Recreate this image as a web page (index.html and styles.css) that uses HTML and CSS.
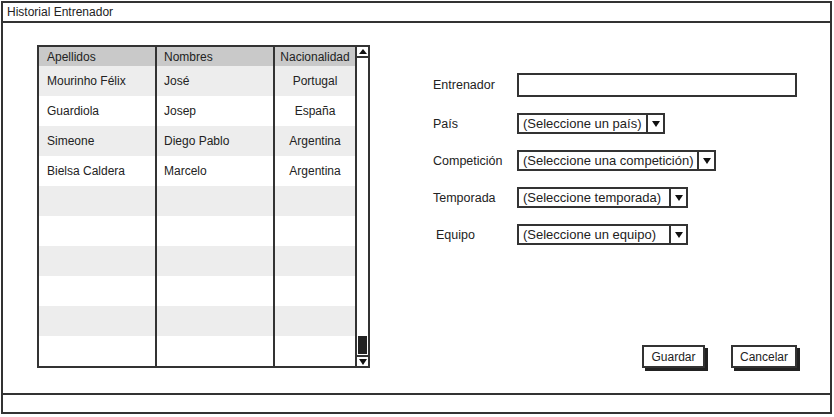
FILE: index.html
```html
<!DOCTYPE html>
<html lang="es">
<head>
    <meta charset="UTF-8">
    <title>Historial Entrenador</title>
    <link rel="stylesheet" href="styles.css">
</head>
<body>
<div class="window">
    <div class="titlebar">Historial Entrenador</div>
    <div class="main">
        <div class="table-wrap">
            <div class="grid">
                <div class="cell head">Apellidos</div>
                <div class="cell head">Nombres</div>
                <div class="cell head center">Nacionalidad</div>

                <div class="cell">Mourinho Félix</div>
                <div class="cell">José</div>
                <div class="cell center">Portugal</div>

                <div class="cell alt">Guardiola</div>
                <div class="cell alt">Josep</div>
                <div class="cell alt center">España</div>

                <div class="cell">Simeone</div>
                <div class="cell">Diego Pablo</div>
                <div class="cell center">Argentina</div>

                <div class="cell alt">Bielsa Caldera</div>
                <div class="cell alt">Marcelo</div>
                <div class="cell alt center">Argentina</div>

                <div class="cell"></div><div class="cell"></div><div class="cell"></div>
                <div class="cell alt"></div><div class="cell alt"></div><div class="cell alt"></div>
                <div class="cell"></div><div class="cell"></div><div class="cell"></div>
                <div class="cell alt"></div><div class="cell alt"></div><div class="cell alt"></div>
                <div class="cell"></div><div class="cell"></div><div class="cell"></div>
                <div class="cell alt"></div><div class="cell alt"></div><div class="cell alt"></div>
            </div>
            <div class="scrollbar">
                <div class="scroll-btn"><span class="tri-up"></span></div>
                <div class="scroll-track">
                    <div class="thumb"></div>
                </div>
                <div class="scroll-btn bottom"><span class="tri-down"></span></div>
            </div>
        </div>

        <div class="side">
            <form class="form">
                <div class="form-row">
                    <label for="entrenador">Entrenador</label>
                    <input type="text" id="entrenador" class="text-input">
                </div>
                <div class="form-row">
                    <label>País</label>
                    <div class="combo w-pais"><span class="combo-text">(Seleccione un país)</span><span class="combo-arrow"><span class="tri-down"></span></span></div>
                </div>
                <div class="form-row">
                    <label>Competición</label>
                    <div class="combo w-comp"><span class="combo-text">(Seleccione una competición)</span><span class="combo-arrow"><span class="tri-down"></span></span></div>
                </div>
                <div class="form-row">
                    <label>Temporada</label>
                    <div class="combo w-temp"><span class="combo-text">(Seleccione temporada)</span><span class="combo-arrow"><span class="tri-down"></span></span></div>
                </div>
                <div class="form-row">
                    <label class="indent">Equipo</label>
                    <div class="combo w-temp"><span class="combo-text">(Seleccione un equipo)</span><span class="combo-arrow"><span class="tri-down"></span></span></div>
                </div>
            </form>

            <div class="actions">
                <button type="button" class="btn btn-save">Guardar</button>
                <button type="button" class="btn btn-cancel">Cancelar</button>
            </div>
        </div>
    </div>
    <div class="statusbar"></div>
</div>
</body>
</html>
```

FILE: styles.css
```css
* {
    box-sizing: border-box;
}
body {
    margin: 0;
    background: #fff;
    font-family: "Liberation Sans", Arial, sans-serif;
    font-size: 12px;
    color: #222;
}
.window {
    width: 831px;
    margin: 1px 0 0 1px;
}
.titlebar {
    height: 22px;
    border: 2px solid #333;
    padding-left: 4px;
    line-height: 18px;
}
.main {
    height: 370px;
    border-left: 2px solid #333;
    border-right: 2px solid #333;
    padding: 22px 37px 25px 34px;
    display: flex;
}
.statusbar {
    height: 21px;
    border: 2px solid #333;
}

/* tabla */
.table-wrap {
    display: flex;
}
.grid {
    width: 320px;
    height: 323px;
    border: 2px solid #333;
    display: grid;
    grid-template-columns: 118px 118px 80px;
    grid-template-rows: 19px repeat(10, 30px);
}
.cell {
    border-right: 2px solid #333;
    padding-left: 8px;
    display: flex;
    align-items: center;
    white-space: nowrap;
}
.cell:nth-child(3n) {
    border-right: none;
}
.cell:nth-child(3n+2) {
    padding-left: 7px;
}
.cell.head {
    background: #c9c9c9;
    padding-top: 1px;
}
.cell:nth-child(n+4):nth-child(-n+6),
.cell:nth-child(n+10):nth-child(-n+12),
.cell.alt {
    background: #fff;
}
.cell.center {
    justify-content: center;
    padding-left: 0;
}
.grid .cell:not(.head):not(.alt) {
    background: #ededed;
}
.scrollbar {
    width: 13px;
    height: 323px;
    border: 2px solid #333;
    border-left: none;
    display: flex;
    flex-direction: column;
}
.scroll-btn {
    height: 11px;
    border-bottom: 2px solid #333;
    display: flex;
    justify-content: center;
    padding-top: 2px;
}
.scroll-btn.bottom {
    border-bottom: none;
    border-top: 2px solid #333;
    padding-top: 2px;
}
.scroll-track {
    flex: 1;
    display: flex;
    flex-direction: column;
    justify-content: flex-end;
    padding: 0 1px 1px 1px;
}
.thumb {
    height: 18px;
    background: #222;
}
.tri-up {
    width: 0;
    height: 0;
    border-left: 4px solid transparent;
    border-right: 4px solid transparent;
    border-bottom: 5px solid #111;
}
.tri-down {
    width: 0;
    height: 0;
    border-left: 4px solid transparent;
    border-right: 4px solid transparent;
    border-top: 6px solid #111;
}

/* formulario */
.side {
    flex: 1;
    margin-left: 63px;
    display: flex;
    flex-direction: column;
}
.form {
    margin-top: 28px;
    display: flex;
    flex-direction: column;
    gap: 16px;
}
.form-row {
    display: flex;
    align-items: center;
}
.form-row label {
    width: 84px;
    font-size: 12.5px;
}
.form-row label.indent {
    padding-left: 3px;
}
.text-input {
    width: 280px;
    height: 24px;
    border: 2px solid #333;
    border-radius: 0;
    font: inherit;
}
.combo {
    height: 21px;
    border: 2px solid #333;
    display: flex;
    font-size: 13px;
}
.w-pais {
    width: 148px;
}
.w-comp {
    width: 199px;
}
.w-temp {
    width: 171px;
}
.combo-text {
    flex: 1;
    padding-left: 4px;
    line-height: 17px;
    white-space: nowrap;
}
.combo-arrow {
    width: 17px;
    border-left: 2px solid #333;
    display: flex;
    align-items: center;
    justify-content: center;
}
.actions {
    margin-top: auto;
    display: flex;
    justify-content: flex-end;
    gap: 26px;
}
.btn {
    height: 23px;
    border: 2px solid #333;
    background: #fff;
    box-shadow: 3px 3px 0 #222;
    font-family: inherit;
    font-size: 12px;
    color: #222;
    padding: 0;
    cursor: pointer;
}
.btn-save {
    width: 63px;
}
.btn-cancel {
    width: 66px;
}
```
